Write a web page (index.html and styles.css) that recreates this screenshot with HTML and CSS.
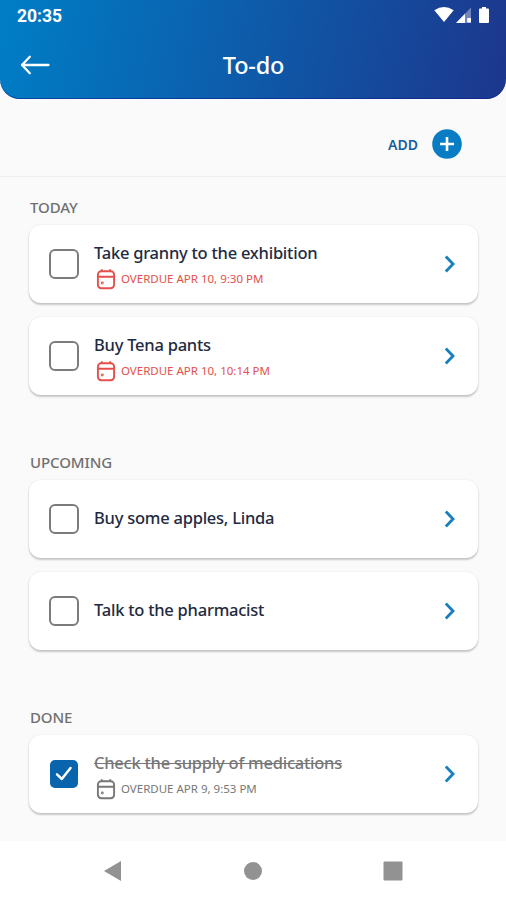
FILE: index.html
```html
<!DOCTYPE html>
<html lang="en">
<head>
<meta charset="utf-8">
<title>To-do</title>
<link rel="stylesheet" href="styles.css">
</head>
<body>
<svg class="defs" width="0" height="0" aria-hidden="true">
  <symbol id="calendar" viewBox="0 0 20 22">
    <rect x="1.900" y="3.2" width="16.200" height="17" rx="3.4"/>
    <path d="M2 8.8h16M5.8 1.300v2.500M14.2 1.300v2.500"/>
    <circle cx="6.3" cy="15" r="0.5"/>
  </symbol>
  <symbol id="chevron" viewBox="0 0 12 20"><path d="M1.8 2.6 9 10 1.8 17.4"/></symbol>
</svg>
<header class="header">
  <div class="status">
    <span class="time">20:35</span>
    <svg class="signals" width="60" height="20" viewBox="0 0 60 20">
      <path d="M0.3 4.2Q10 -2.2 19.7 4.2L10 16z"/>
      <path d="M37 1.5V17H22z" opacity=".38"/>
      <path d="M31 7.7V17H22z"/>
      <path d="M33.2 12h3.8v4.500h-3.800z"/>
      <path d="M48 1h4v1.500h2a1 1 0 0 1 1 1V16a1 1 0 0 1-1 1h-8a1 1 0 0 1-1-1V3.500a1 1 0 0 1 1-1h2z"/>
    </svg>
  </div>
  <div class="titlebar">
    <svg class="back" width="30" height="20" viewBox="0 0 30 20"><path d="M9.800 1.800 2 10l7.800 8.200M2.500 10H28.500"/></svg>
    <h1 class="title">To-do</h1>
  </div>
</header>
<div class="addbar">
  <span class="add">ADD</span>
  <svg width="30" height="30" viewBox="0 0 30 30"><circle class="disc" cx="15" cy="15" r="14.800"/><path class="plus" d="M15 8v14M8 15h14"/></svg>
</div>
<main class="list">
  <section class="group">
    <h2 class="label">TODAY</h2>
    <article class="card">
      <span class="check"></span>
      <div class="body dated"><p class="task">Take granny to the exhibition</p><p class="due"><svg class="cal"><use href="#calendar"/></svg><span>OVERDUE APR 10, 9:30 PM</span></p></div>
      <svg class="chev"><use href="#chevron"/></svg>
    </article>
    <article class="card">
      <span class="check"></span>
      <div class="body dated"><p class="task">Buy Tena pants</p><p class="due"><svg class="cal"><use href="#calendar"/></svg><span>OVERDUE APR 10, 10:14 PM</span></p></div>
      <svg class="chev"><use href="#chevron"/></svg>
    </article>
  </section>
  <section class="group">
    <h2 class="label">UPCOMING</h2>
    <article class="card">
      <span class="check"></span>
      <div class="body"><p class="task">Buy some apples, Linda</p></div>
      <svg class="chev"><use href="#chevron"/></svg>
    </article>
    <article class="card">
      <span class="check"></span>
      <div class="body"><p class="task">Talk to the pharmacist</p></div>
      <svg class="chev"><use href="#chevron"/></svg>
    </article>
  </section>
  <section class="group">
    <h2 class="label">DONE</h2>
    <article class="card done">
      <span class="check on"><svg width="18" height="16" viewBox="0 0 18 16"><path d="M2 8.400 6.800 13 15.500 2"/></svg></span>
      <div class="body dated"><p class="task">Check the supply of medications</p><p class="due"><svg class="cal"><use href="#calendar"/></svg><span>OVERDUE APR 9, 9:53 PM</span></p></div>
      <svg class="chev"><use href="#chevron"/></svg>
    </article>
  </section>
</main>
<nav class="nav">
  <svg width="20" height="22" viewBox="0 0 20 22"><path d="M1 11 18 1v20z"/></svg>
  <svg width="20" height="20" viewBox="0 0 20 20"><circle cx="10" cy="10" r="9"/></svg>
  <svg width="20" height="20" viewBox="0 0 20 20"><rect x=".5" y=".5" width="19" height="19" rx="1"/></svg>
</nav>
</body>
</html>
```
FILE: styles.css
```css
* { box-sizing: border-box; }
body {
  margin: 0;
  width: 506px;
  height: 900px;
  overflow: hidden;
  display: flex;
  flex-direction: column;
  background: #fafafa;
  font-family: "Noto Sans", sans-serif;
}
h1, h2, p { margin: 0; }
.defs { display: block; position: absolute; }
.header {
  height: 99px;
  flex: none;
  border-radius: 0 0 20px 20px;
  background: linear-gradient(102deg, #007dc5 2%, #1c388e 98%);
  box-shadow: inset 0 -1px 0 rgba(10, 30, 145, .6);
  color: #fff;
}
.status {
  height: 32px;
  padding: 0 12px 0 17px;
  display: flex;
  align-items: center;
  justify-content: space-between;
}
.time { font: 700 17.500px Roboto, sans-serif; }
.signals { fill: #fff; margin-top: -1px; }
.titlebar {
  height: 66px;
  padding-left: 20px;
  display: grid;
  grid-template-columns: 30px 1fr 50px;
  align-items: center;
}
.back { fill: none; stroke: #fff; stroke-width: 2.300; stroke-linecap: round; stroke-linejoin: round; }
.title { text-align: center; font-size: 23.500px; font-weight: 500; line-height: 30px; letter-spacing: -0.2px; padding-left: 1px; }
.addbar {
  height: 78px;
  flex: none;
  padding: 13px 44px 0 0;
  display: flex;
  align-items: center;
  justify-content: flex-end;
  gap: 14px;
  border-bottom: 1px solid #eeeeee;
}
.add { font-size: 14px; font-weight: 600; color: #175da3; }
.disc { fill: #087dc4; }
.plus { stroke: #fff; stroke-width: 2.600; }
.list { flex: none; height: 664px; padding: 19px 28px 0 29px; }
.group { display: flex; flex-direction: column; gap: 14px; height: 255px; }
.group:last-child { height: auto; }
.label {
  height: 24px;
  margin-bottom: -9px;
  padding-left: 1px;
  font-size: 15px;
  line-height: 22px;
  font-weight: 500;
  letter-spacing: -0.1px;
  color: #707070;
}
.card {
  height: 78px;
  flex: none;
  padding: 0 22px 0 20px;
  display: flex;
  align-items: center;
  background: #fff;
  border-radius: 12px;
  box-shadow: 0 2px 2px rgba(0, 0, 0, .2), 0 0 2px rgba(0, 0, 0, .1);
}
.check { width: 30px; height: 30px; border: 2px solid #7c7c7c; border-radius: 6px; }
.check.on {
  width: 28px;
  height: 28px;
  margin: 0 1px;
  border: 0;
  border-radius: 5px;
  background: #0865ad;
  display: grid;
  place-items: center;
}
.check.on path { fill: none; stroke: #fff; stroke-width: 2.500; stroke-linecap: round; stroke-linejoin: round; }
.body { flex: 1; padding-left: 15px; margin-top: -3px; }
.dated { margin-top: 2px; }
.task { font-size: 16.500px; line-height: 24px; font-weight: 500; letter-spacing: -0.240px; color: #222a40; white-space: nowrap; }
.due { display: flex; align-items: center; gap: 5px; height: 22px; margin-top: 3px; padding-left: 2px; font-size: 11.500px; color: #e2514b; white-space: nowrap; }
.cal { width: 20px; height: 22px; fill: none; stroke: currentColor; stroke-width: 1.900; }
.chev { width: 12px; height: 20px; fill: none; stroke: #177fc1; stroke-width: 2.800; }
.done .task { color: #777; text-decoration: line-through; text-decoration-thickness: 1px; }
.done .due { color: #777; }
.nav {
  height: 59px;
  flex: none;
  padding: 0 103px;
  display: flex;
  align-items: center;
  justify-content: space-between;
  background: #fff;
}
.nav svg { fill: #929292; }
```
